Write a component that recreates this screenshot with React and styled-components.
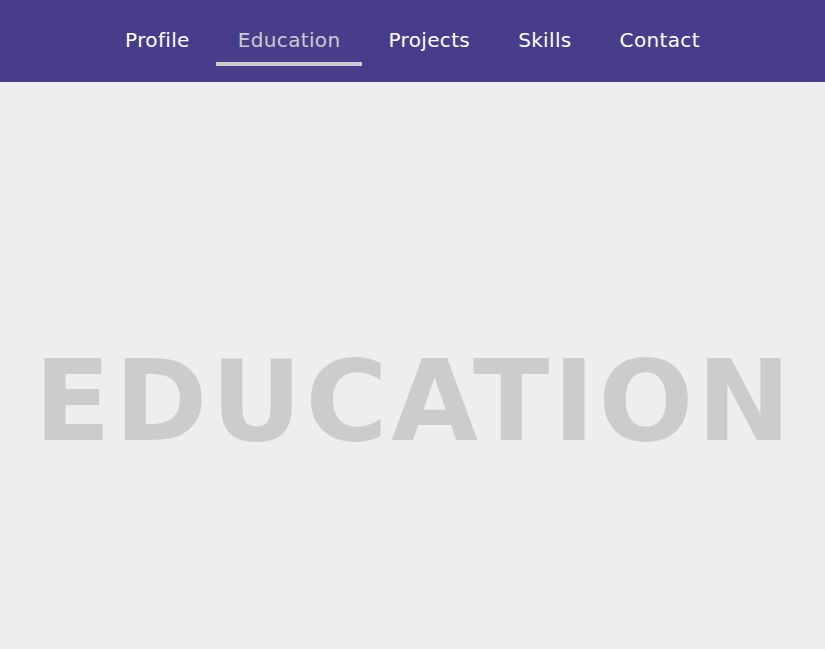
import React from "react";
import styled, { createGlobalStyle } from "styled-components";

const GlobalStyle = createGlobalStyle`
  html, body { margin: 0; padding: 0; height: 100%; overflow: hidden; }
  body { background: #eeeeee; font-family: "DejaVu Sans", Verdana, sans-serif; }
`;

const Nav = styled.nav`
  height: 82px;
  background: #483d8b;
  display: flex;
  justify-content: center;
  align-items: flex-start;
  gap: 5px;
`;

const NavItem = styled.a`
  display: block;
  padding: 28px 21.5px 10px;
  font-size: 20px;
  line-height: 24px;
  letter-spacing: 0.35px;
  color: ${(p) => (p.$active ? "#cccccc" : "#ffffff")};
  border-bottom: 4px solid ${(p) => (p.$active ? "#cccccc" : "transparent")};
  text-decoration: none;
  cursor: pointer;
`;

const Main = styled.main`
  height: calc(100vh - 82px);
  box-sizing: border-box;
  padding-top: 71px;
  display: flex;
  align-items: center;
  justify-content: center;
`;

const Title = styled.h1`
  margin: 0 0 0 3.6px;
  font-size: 112px;
  line-height: 112px;
  font-weight: bold;
  letter-spacing: 3.6px;
  color: #cccccc;
  font-family: "DejaVu Sans", Verdana, sans-serif;
  white-space: nowrap;
`;

const items = ["Profile", "Education", "Projects", "Skills", "Contact"];

export default function App() {
  return (
    <>
      <GlobalStyle />
      <Nav>
        {items.map((it) => (
          <NavItem key={it} $active={it === "Education"}>
            {it}
          </NavItem>
        ))}
      </Nav>
      <Main>
        <Title>EDUCATION</Title>
      </Main>
    </>
  );
}
